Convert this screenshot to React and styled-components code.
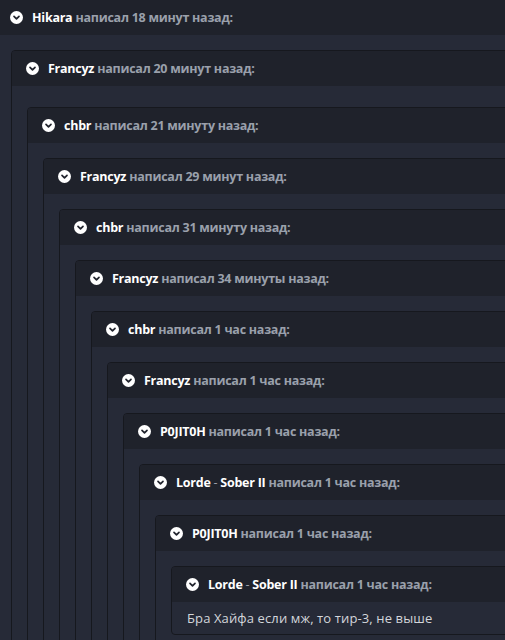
import React from "react";
import styled, { createGlobalStyle } from "styled-components";

const Global = createGlobalStyle`
  html, body { margin: 0; padding: 0; background: #262a37; overflow: hidden; }
  body { font-family: "Open Sans", "Noto Sans", Arial, sans-serif; }
`;

const Page = styled.div`
  width: 760px;
  margin-left: -5px;
  margin-top: -1px;
`;

const Block = styled.div`
  border: 1px solid #16181e;
  border-radius: 4px;
  background: #262a37;
`;

const Header = styled.div`
  display: flex;
  align-items: center;
  gap: 9px;
  height: 35px;
  padding-left: 14px;
  background: #1f222b;
  border-radius: 3px 3px 0 0;
  font-size: 12.5px;
  font-weight: 700;
  letter-spacing: -0.25px;
  white-space: nowrap;
`;

const Name = styled.span`
  color: #ffffff;
`;

const Meta = styled.span`
  color: #9aa0ab;
`;

const Sep = styled.span`
  color: #9aa0ab;
  font-weight: 400;
`;

const Body = styled.div`
  padding: ${(p) => (p.$extra ? "21px" : "15px")} 15px 15px 15px;
`;

const TextBody = styled.div`
  padding: 7px 15px 7px 15px;
  line-height: 18px;
  font-size: 13px;
  letter-spacing: 0.12px;
  color: #d3d6db;
`;

const Toggle = () => (
  <svg width="13" height="13" viewBox="0 0 13 13" style={{ flex: "none" }}>
    <circle cx="6.5" cy="6.5" r="6.5" fill="#ffffff" />
    <path d="M4 5.4 L6.5 7.9 L9 5.4" fill="none" stroke="#22252e" strokeWidth="1.7" strokeLinecap="round" strokeLinejoin="round" />
  </svg>
);

const chain = [
  { name: ["Hikara"], time: "18 минут назад:" },
  { name: ["Francyz"], time: "20 минут назад:", extra: true },
  { name: ["chbr"], time: "21 минуту назад:" },
  { name: ["Francyz"], time: "29 минут назад:" },
  { name: ["chbr"], time: "31 минуту назад:" },
  { name: ["Francyz"], time: "34 минуты назад:" },
  { name: ["chbr"], time: "1 час назад:" },
  { name: ["Francyz"], time: "1 час назад:" },
  { name: ["P0JIT0H"], time: "1 час назад:" },
  { name: ["Lorde", "Sober II"], time: "1 час назад:" },
  { name: ["P0JIT0H"], time: "1 час назад:" },
  { name: ["Lorde", "Sober II"], time: "1 час назад:" },
];

const Quote = ({ index }) => {
  const item = chain[index];
  const isLast = index === chain.length - 1;
  return (
    <Block>
      <Header>
        <Toggle />
        <span>
          {item.name.length === 2 ? (
            <>
              <Name>{item.name[0]}</Name>
              <Sep> - </Sep>
              <Name>{item.name[1]}</Name>
            </>
          ) : (
            <Name>{item.name[0]}</Name>
          )}{" "}
          <Meta>написал {item.time}</Meta>
        </span>
      </Header>
      {isLast ? (
        <TextBody>Бра Хайфа если мж, то тир-3, не выше</TextBody>
      ) : (
        <Body $extra={item.extra}>
          <Quote index={index + 1} />
        </Body>
      )}
    </Block>
  );
};

export default function App() {
  return (
    <>
      <Global />
      <Page>
        <Quote index={0} />
      </Page>
    </>
  );
}
